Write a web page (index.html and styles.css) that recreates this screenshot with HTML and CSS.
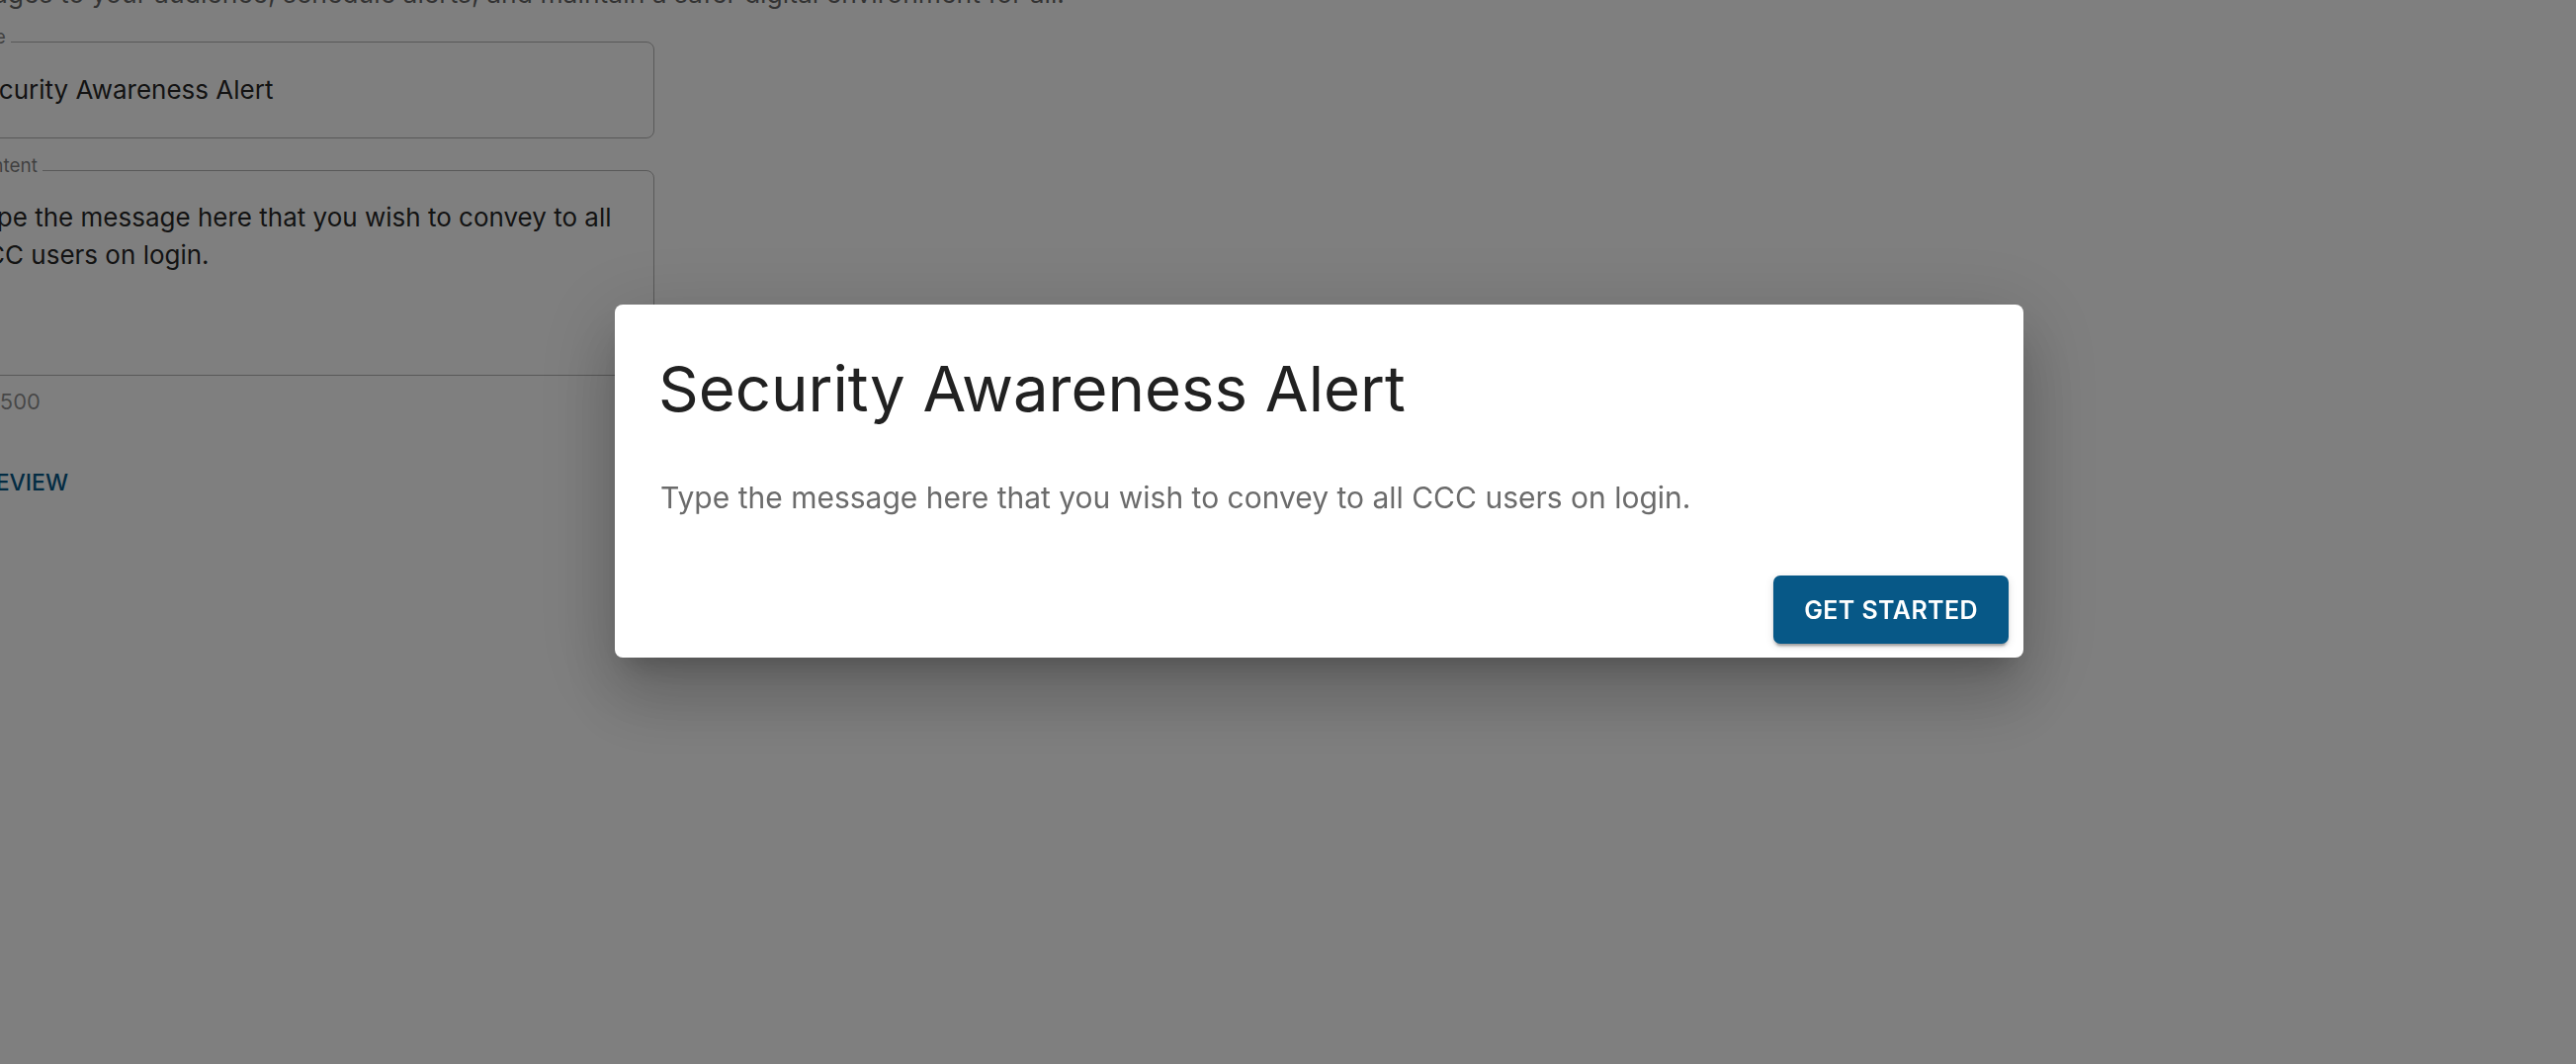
FILE: index.html
```html
<!DOCTYPE html>
<html>

<head>
    <title>Broadcast Alert</title>
    <link rel="stylesheet" href="styles.css">
</head>

<body>

    <div class="page">
        <p class="intro">Broadcast messages to your audience, schedule alerts, and maintain a safer digital environment for all.</p>

        <div class="field">
            <label class="field-label">Title</label>
            <div class="field-value">Security Awareness Alert</div>
        </div>

        <div class="field field-multi">
            <label class="field-label">Content</label>
            <div class="field-value">Type the message here that you wish to convey to all CCC users on login.</div>
        </div>
        <div class="counter">72/500</div>

        <button class="text-btn">Preview</button>
    </div>

    <!-- preview dialog -->
    <div class="backdrop">
        <div class="dialog">
            <h2 class="dialog-title">Security Awareness Alert</h2>
            <p class="dialog-text">Type the message here that you wish to convey to all CCC users on login.</p>
            <div class="dialog-actions">
                <button class="primary-btn">Get Started</button>
            </div>
        </div>
    </div>

</body>

</html>
```

FILE: styles.css
```css
body {
    margin: 0;
    background: #fff;
    font-family: Inter, "Noto Sans", sans-serif;
    overflow: hidden;
}

.page {
    width: 718px;
    margin-left: -56px;
}

/* only the tail of this line shows, so it is pinned by its right end */
.intro {
    margin: -27px 0 0 -400px;
    width: 1533px;
    text-align: right;
    white-space: nowrap;
    font-size: 26.5px;
    line-height: 40px;
    color: rgba(0, 0, 0, 0.6);
}

.field {
    position: relative;
    margin-top: 29px;
    height: 98px;
    border: 1px solid rgba(0, 0, 0, 0.3);
    border-radius: 8px;
    box-sizing: border-box;
}

.field-multi {
    height: 208px;
    margin-top: 32px;
}

.field-label {
    position: absolute;
    top: -16px;
    left: 17px;
    padding: 0 5px;
    background: #fff;
    font-size: 19px;
    line-height: 22px;
    color: rgba(0, 0, 0, 0.5);
}

.field-value {
    padding: 0 22px;
    font-size: 26px;
    line-height: 96px;
    color: rgba(0, 0, 0, 0.87);
}

.field-multi .field-value {
    padding-top: 28px;
    line-height: 38px;
    width: 660px;
}

.counter {
    margin: 10px 0 0 22px;
    font-size: 22px;
    line-height: 32px;
    color: rgba(0, 0, 0, 0.45);
}

.text-btn {
    margin: 44px 0 0 8px;
    padding: 8px 14px;
    border: none;
    background: none;
    font-family: inherit;
    font-size: 23px;
    font-weight: 500;
    text-transform: uppercase;
    color: #075887;
}

.backdrop {
    position: fixed;
    inset: 0;
    background: rgba(0, 0, 0, 0.5);
    display: flex;
    justify-content: center;
    align-items: flex-start;
    padding: 308px 0 0 63px;
}

.dialog {
    width: 1425px;
    background: #fff;
    border-radius: 8px;
    box-shadow: 0 19px 26px -12px rgba(0, 0, 0, 0.2),
        0 42px 66px 5px rgba(0, 0, 0, 0.14),
        0 16px 80px 14px rgba(0, 0, 0, 0.12);
}

.dialog-title {
    margin: 0;
    padding: 47px 44px 0;
    font-size: 63.5px;
    font-weight: 400;
    line-height: 76px;
    color: #212121;
}

.dialog-text {
    margin: 51px 0 0;
    padding: 0 46px;
    font-size: 30px;
    line-height: 42px;
    color: #6b6b6b;
}

.dialog-actions {
    display: flex;
    justify-content: flex-end;
    padding: 58px 15px 14px;
}

.primary-btn {
    height: 69px;
    padding: 0 31px;
    border: none;
    border-radius: 7px;
    background: #075887;
    color: #fff;
    font-family: inherit;
    font-size: 25px;
    font-weight: 600;
    letter-spacing: 0.4px;
    text-transform: uppercase;
    box-shadow: 0 5px 2px -3px rgba(0, 0, 0, 0.2),
        0 3px 3px 0 rgba(0, 0, 0, 0.14),
        0 2px 9px 0 rgba(0, 0, 0, 0.12);
}
```
